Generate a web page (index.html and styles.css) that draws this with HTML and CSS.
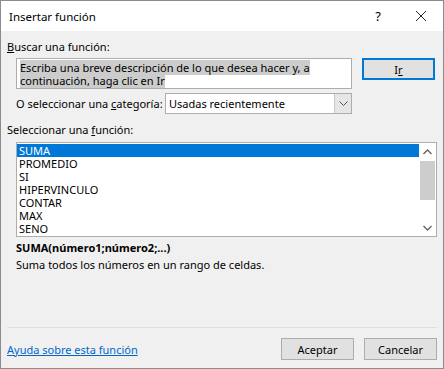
FILE: index.html
```html
<!DOCTYPE html>
<html lang="es">
<head>
    <meta charset="UTF-8">
    <meta name="viewport" content="width=device-width, initial-scale=1.0">
    <title>Insertar función</title>

    <link rel="stylesheet" href="styles.css">
</head>
<body>
    <div class="ventana">
        <!-- barra de titulo -->
        <div class="titulo">
            <span class="titulo-texto">Insertar función</span>
            <span class="ayuda">?</span>
            <span class="cerrar">
                <svg width="12" height="12" viewBox="0 0 12 12">
                    <path d="M1 1 L11 11 M11 1 L1 11" stroke="#222" stroke-width="1" fill="none"/>
                </svg>
            </span>
        </div>

        <div class="cuerpo">
            <div class="etiqueta"><u>B</u>uscar una función:</div>

            <div class="fila-buscar">
                <div class="caja-texto">
                    <span class="sel">Escriba una breve descripción de lo que desea hacer y, a </span><br>
                    <span class="sel">continuación, haga clic en Ir</span>
                </div>
                <button class="boton boton-ir">I<u>r</u></button>
            </div>

            <div class="fila-categoria">
                <span class="etiqueta-cat">O seleccionar una <u>c</u>ategoría:</span>
                <div class="combo">
                    <span class="combo-valor">Usadas recientemente</span>
                    <span class="combo-flecha">
                        <svg width="9" height="6" viewBox="0 0 9 6">
                            <path d="M0.5 0.5 L4.5 4.5 L8.5 0.5" stroke="#555" stroke-width="1" fill="none"/>
                        </svg>
                    </span>
                </div>
            </div>

            <div class="etiqueta etiqueta-lista">Seleccionar una <u>f</u>unción:</div>

            <div class="lista">
                <div class="lista-items" id="lista-funciones"></div>
                <div class="barra">
                    <span class="barra-flecha">
                        <svg width="9" height="6" viewBox="0 0 9 6">
                            <path d="M0.5 5 L4.5 1 L8.5 5" stroke="#606060" stroke-width="1.3" fill="none"/>
                        </svg>
                    </span>
                    <div class="barra-pista">
                        <div class="barra-pulgar"></div>
                    </div>
                    <span class="barra-flecha">
                        <svg width="9" height="6" viewBox="0 0 9 6">
                            <path d="M0.5 1 L4.5 5 L8.5 1" stroke="#606060" stroke-width="1.3" fill="none"/>
                        </svg>
                    </span>
                </div>
            </div>

            <div class="sintaxis">SUMA(número1;número2;...)</div>
            <div class="descripcion">Suma todos los números en un rango de celdas.</div>
        </div>

        <div class="pie">
            <a href="#" class="enlace">Ayuda sobre esta función</a>
            <div class="botones">
                <button class="boton">Aceptar</button>
                <button class="boton">Cancelar</button>
            </div>
        </div>
    </div>

    <script>
        const funciones = ['SUMA', 'PROMEDIO', 'SI', 'HIPERVINCULO', 'CONTAR', 'MAX', 'SENO'];
        const lista = document.getElementById('lista-funciones');
        lista.innerHTML = funciones.map((f, i) =>
            `<div class="item ${i === 0 ? 'activo' : ''}">${f}</div>`
        ).join('');
    </script>
</body>
</html>
```

FILE: styles.css
```css
* {
    box-sizing: border-box;
}

body {
    margin: 0;
    font-family: "Noto Sans", "Open Sans", sans-serif;
    font-size: 11px;
    color: #000;
    background: #fff;
}

.ventana {
    width: 444px;
    height: 369px;
    border: 1px solid #8c8c8c;
    background: #f0f0f0;
    display: flex;
    flex-direction: column;
}

.titulo {
    height: 30px;
    background: #fff;
    display: flex;
    align-items: center;
    padding-left: 8px;
    font-size: 11.5px;
}
.titulo-texto {
    flex: 1;
}
.ayuda {
    width: 20px;
    text-align: center;
    margin-right: 27px;
    font-size: 13px;
}
.cerrar {
    width: 12px;
    height: 12px;
    margin-right: 16px;
    display: flex;
}

.cuerpo {
    padding: 0 6px;
}

.etiqueta {
    margin-top: 8px;
    line-height: 15px;
}
.etiqueta-lista {
    margin-top: 8px;
}

.fila-buscar {
    display: flex;
    align-items: flex-start;
    margin-top: 4px;
    padding-left: 9px;
}
.caja-texto {
    width: 336px;
    height: 31px;
    background: #fff;
    border: 1px solid #adadad;
    padding: 2px 0 0 3px;
    line-height: 13px;
}
.sel {
    background: #cccccc;
}

.boton {
    font-family: inherit;
    font-size: 11px;
    width: 73px;
    height: 22px;
    background: #e1e1e1;
    border: 1px solid #adadad;
    padding: 0;
    color: #000;
}
.boton-ir {
    margin-left: 10px;
    border: 2px solid #0078d7;
}

.fila-categoria {
    display: flex;
    align-items: center;
    margin-top: 4px;
    padding-left: 9px;
}
.etiqueta-cat {
    width: 149px;
    white-space: nowrap;
}
.combo {
    width: 187px;
    height: 21px;
    background: #fff;
    border: 1px solid #adadad;
    display: flex;
}
.combo-valor {
    flex: 1;
    padding-left: 3px;
    line-height: 19px;
}
.combo-flecha {
    width: 17px;
    background: #e6e6e6;
    border-left: 1px solid #c8c8c8;
    display: flex;
    align-items: center;
    justify-content: center;
}

.lista {
    margin: 5px 0 0 9px;
    width: 421px;
    height: 95px;
    background: #fff;
    border: 1px solid #adadad;
    display: flex;
    padding: 1px 0 0 0;
}
.lista-items {
    flex: 1;
}
.item {
    height: 13px;
    line-height: 13px;
    padding-left: 2px;
}
.activo {
    background: #0078d7;
    color: #fff;
}
.barra {
    width: 17px;
    display: flex;
    flex-direction: column;
    margin-top: -1px;
}
.barra-flecha {
    height: 17px;
    display: flex;
    align-items: center;
    justify-content: center;
}
.barra-pista {
    flex: 1;
}
.barra-pulgar {
    margin: 1px 1px 0 1px;
    height: 39px;
    background: #cdcdcd;
}

.sintaxis {
    margin: 2px 0 0 9px;
    font-weight: bold;
    line-height: 17px;
}
.descripcion {
    margin-left: 9px;
    line-height: 17px;
}

.pie {
    margin: auto 6px 0 6px;
    border-top: 1px solid #dfdfdf;
    padding: 10px 0 8px 0;
    display: flex;
    align-items: center;
}
.enlace {
    flex: 1;
    color: #0066cc;
    text-decoration: underline;
}
.botones {
    display: flex;
    gap: 10px;
}
```
